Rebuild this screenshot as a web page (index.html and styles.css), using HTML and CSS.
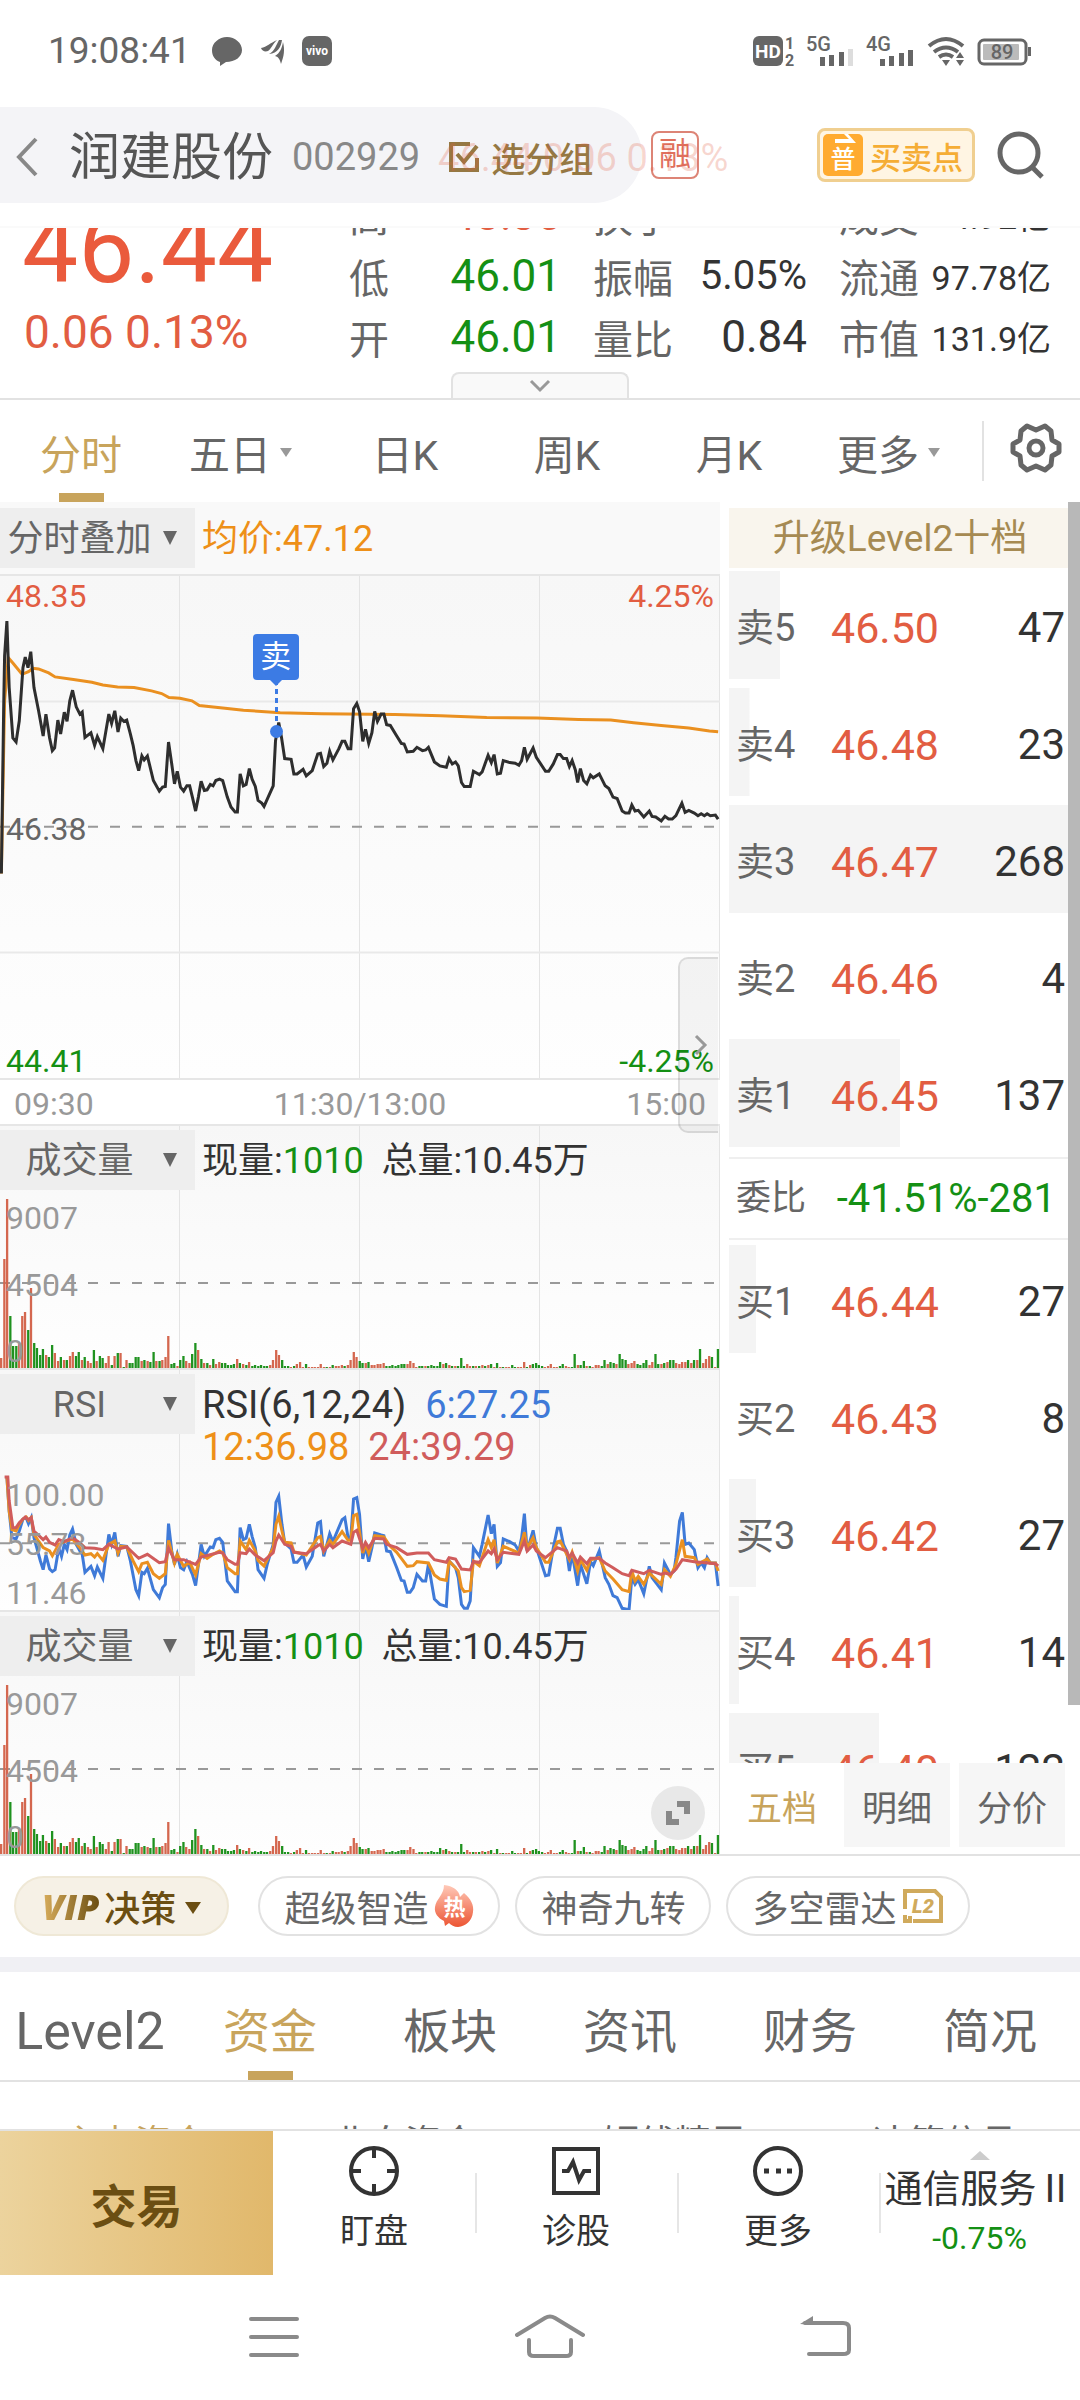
FILE: index.html
```html
<!DOCTYPE html>
<html lang="zh-CN">
<head>
  <meta charset="UTF-8">
  <meta name="viewport" content="width=device-width, initial-scale=1">
  <title>润建股份 002929</title>
  <link rel="stylesheet" href="styles.css">
</head>
<body>
  <!-- status bar -->
  <div class="status">
    <span class="clock">19:08:41</span>
    <svg class="status-left" viewBox="0 0 122 32" width="122" height="32" fill="#666">
      <path d="M15 2C7 2 0 8 0 15c0 6 3 10 8 12v4l6-4c9 0 16-5 16-12S23 2 15 2z"/>
      <path d="M49 13c6-1 9-5 16-8-5 5-6 9-9 11-3 1-6 0-7-3zM57 19c6-3 7-9 10-14l3 0c-1 7-4 13-13 14zM63 21c5-3 7-8 8-14 2 8 1 14-2 22-1-4-2-7-6-8z"/>
      <rect x="90" y="1" width="30" height="30" rx="7"/>
      <text x="105" y="20" text-anchor="middle" class="vivo">vivo</text>
    </svg>
    <svg class="status-right" viewBox="0 0 280 32" width="280" height="32" fill="#666">
      <rect x="1" y="1" width="30" height="30" rx="6"/>
      <text x="16" y="23" text-anchor="middle" class="hd">HD</text>
      <text x="33" y="14" class="tiny">1</text>
      <text x="33" y="31" class="tiny">2</text>
      <text x="54" y="16" class="net">5G</text>
      <path d="M68 22h5v9h-5zM77 20h5v11h-5zM87 17h5v14h-5z"/>
      <path d="M96 14h5v17h-5z" fill="#ddd"/>
      <text x="114" y="16" class="net">4G</text>
      <path d="M128 24h5v7h-5zM137 21h5v10h-5zM147 18h5v13h-5zM156 15h5v16h-5z"/>
      <path d="M177 11q17-14 34 0M182 17q12-9 24 0M187 22q7-5 14 0" fill="none" stroke="#666" stroke-width="4"/>
      <path d="M190 25h8l-4 6zM204 23l4-6 4 6zM204 25h8l-4 6z"/>
      <rect x="227" y="5" width="47" height="24" rx="5" fill="none" stroke="#666" stroke-width="3"/>
      <rect x="231" y="9" width="36" height="16" rx="1" fill="#bbb"/>
      <path d="M276 12h3v9h-3z"/>
      <text x="250" y="24" text-anchor="middle" class="net">89</text>
    </svg>
  </div>

  <!-- stock header -->
  <header class="header">
    <div class="pill">
      <button class="icon-btn" aria-label="返回">
        <svg viewBox="0 0 24 40" width="24" height="40" fill="none" stroke="#888" stroke-width="4"><path d="M21 2L4 20l17 18"/></svg>
      </button>
      <h1>润建股份</h1>
      <span class="code">002929</span>
      <button class="group">
        <svg viewBox="0 0 32 32" width="32" height="32" fill="none" stroke="#957843" stroke-width="4"><path d="M22 3H3v26h26V17M9 13l7 8L29 5"/></svg>
        选分组
      </button>
    </div>
    <span class="ghost">46.44 0.06 0.13%</span>
    <span class="margin-tag">融</span>
    <button class="trade-point">
      <span class="pu"><svg viewBox="0 0 34 14" width="34" height="14" fill="#fff"><path d="M12 5h14l-5-5h4l8 9H12z"/></svg>普</span>
      买卖点
    </button>
    <button class="icon-btn search" aria-label="搜索">
      <svg viewBox="0 0 50 50" width="50" height="50" fill="none" stroke="#666" stroke-width="5"><circle cx="23" cy="23" r="19"/><path d="M36 37l10 10"/></svg>
    </button>
  </header>

  <!-- quote summary, scrolled under the header -->
  <section class="quote">
    <div class="last">
      <strong>46.44</strong>
      <span>0.06 0.13%</span>
    </div>
    <dl>
      <dt>高</dt><dd class="up">48.35</dd>
      <dt>换手</dt><dd class="mid">4.96%</dd>
      <dt>成交</dt><dd class="small">4.92亿</dd>
      <dt>低</dt><dd class="down">46.01</dd>
      <dt>振幅</dt><dd class="mid">5.05%</dd>
      <dt>流通</dt><dd class="small">97.78亿</dd>
      <dt>开</dt><dd class="down">46.01</dd>
      <dt>量比</dt><dd>0.84</dd>
      <dt>市值</dt><dd class="small">131.9亿</dd>
    </dl>
    <button class="unfold" aria-label="展开">
      <svg viewBox="0 0 22 14" width="22" height="14" fill="none" stroke="#999" stroke-width="3"><path d="M2 2l9 9 9-9"/></svg>
    </button>
  </section>

  <!-- period tabs -->
  <nav class="period">
    <div class="period-tabs">
      <a href="#" class="active">分时</a>
      <a href="#">五日<i></i></a>
      <a href="#">日K</a>
      <a href="#">周K</a>
      <a href="#">月K</a>
      <a href="#">更多<i></i></a>
    </div>
    <button class="icon-btn gear" aria-label="设置">
      <svg viewBox="0 0 52 52" width="52" height="52" fill="none" stroke="#666" stroke-width="5" stroke-linejoin="round">
        <path d="M17 4l9 4 9-4 6 5 1 9 7 4v8l-7 4-1 9-6 5-9-4-9 4-6-5-1-9-7-4v-8l7-4 1-9z"/><circle cx="26" cy="26" r="7"/>
      </svg>
    </button>
  </nav>

  <main class="market">
    <div class="charts">
      <div class="panel-head">
        <label class="pick"><select aria-label="分时叠加"><option>分时叠加</option></select></label>
        <p class="orange">均价:47.12</p>
      </div>
      <div class="plot price">
        <svg class="lines" viewBox="0 224 1568 1512" preserveAspectRatio="none">
          <path class="rule" d="M0 602H1568M0 1358H1568"/>
          <path class="dash" d="M0 979H1568"/>
          <polyline class="avg" points="3,1120 10,600 18,470 28,486 48,520 62,512 72,502 84,504 106,516 120,528 160,536 200,544 224,552 256,558 292,560 330,570 352,578 368,590 392,592 418,600 434,614 490,622 530,628 610,636 700,639 860,641 960,645 1060,650 1170,652 1260,656 1330,658 1380,666 1440,674 1500,682 1545,691 1564,693"/>
          <polyline class="now" points="3,1120 8,620 10,465 15,360 20,560 28,712 35,724 42,660 50,500 55,468 61,500 67,452 74,560 84,630 94,706 100,640 108,712 114,750 119,742 126,658 132,700 140,634 146,662 152,600 158,568 166,618 174,640 179,634 185,710 198,696 206,734 212,708 224,744 237,640 243,668 250,630 257,694 263,652 270,662 276,658 284,700 290,735 296,780 302,810 309,766 314,778 321,766 334,840 347,872 354,860 360,858 367,724 374,790 380,850 386,812 393,860 400,872 407,856 413,856 419,890 426,932 432,890 438,842 445,870 451,868 458,852 464,856 470,840 478,836 485,840 495,890 503,920 512,935 517,935 523,820 530,856 536,852 543,804 549,836 556,858 562,900 570,908 575,918 584,890 595,856 600,720 607,665 613,710 620,774 634,776 640,820 647,820 660,806 667,826 680,810 692,760 698,758 705,798 712,788 718,752 725,778 738,744 745,722 751,722 758,744 764,744 770,624 777,608 783,632 790,722 796,686 803,728 810,696 816,632 822,662 830,640 836,640 842,672 850,674 864,706 874,728 880,730 887,754 900,752 908,740 920,750 927,748 933,740 946,784 958,796 972,800 978,774 985,790 992,784 998,796 1005,846 1011,858 1024,858 1031,812 1044,822 1050,814 1063,764 1070,786 1076,762 1083,820 1090,818 1096,780 1110,786 1122,788 1130,794 1136,780 1142,740 1148,776 1161,742 1168,770 1188,812 1195,812 1205,790 1214,762 1220,762 1227,774 1234,774 1240,798 1246,780 1253,808 1258,846 1264,804 1271,840 1278,850 1286,824 1292,832 1305,820 1318,856 1326,864 1335,890 1344,894 1355,932 1362,938 1370,938 1376,914 1383,932 1390,930 1402,950 1414,932 1420,948 1428,950 1440,962 1448,948 1456,956 1464,956 1472,946 1485,908 1492,936 1500,930 1512,938 1520,946 1527,940 1534,946 1540,940 1547,946 1558,944 1564,956"/>
        </svg>
        <div class="scale">
          <span class="up">48.35</span><span>46.38</span><span class="down">44.41</span>
        </div>
        <div class="scale right">
          <span class="up">4.25%</span><span class="down">-4.25%</span>
        </div>
        <div class="sell-flag"><b>卖</b></div>
        <button class="drawer" aria-label="收起盘口">
          <svg viewBox="0 0 14 22" width="14" height="22" fill="none" stroke="#999" stroke-width="3"><path d="M2 2l9 9-9 9"/></svg>
        </button>
      </div>
      <div class="times"><span>09:30</span><span>11:30/13:00</span><span>15:00</span></div>

      <div class="panel">
        <div class="panel-head">
          <label class="pick"><select aria-label="指标一"><option>成交量</option></select></label>
          <p>现量:<span class="down">1010</span>&nbsp; 总量:10.45万</p>
        </div>
        <div class="plot">
          <svg class="lines volume" viewBox="0 0 1568 170" preserveAspectRatio="none"></svg>
          <div class="scale"><span>9007</span><span>4504</span><span>0</span></div>
        </div>
      </div>

      <div class="panel">
        <div class="panel-head">
          <label class="pick"><select aria-label="指标二"><option>RSI</option></select></label>
          <p class="rsi-values">RSI(6,12,24)&nbsp; <span class="blue">6:27.25</span><br><span class="orange">12:36.98</span>&nbsp; <span class="rose">24:39.29</span></p>
        </div>
        <div class="plot rsi">
          <svg class="lines" viewBox="0 312 1568 405" preserveAspectRatio="none">
            <path class="dash" d="M0 517H1568"/>
            <polyline class="rsi6" points="15,318 20,420 26,500 35,504 42,480 50,444 57,440 62,458 68,440 74,500 80,530 88,570 94,596 100,552 108,594 114,602 120,596 128,530 134,556 140,520 146,536 152,492 158,474 166,520 174,540 179,550 185,604 198,586 206,614 212,588 224,622 237,490 243,520 250,484 257,556 263,524 276,526 284,570 296,656 302,674 309,604 314,608 321,592 334,656 347,680 354,650 360,640 367,458 374,540 380,580 386,550 393,590 400,596 407,572 419,610 426,644 438,520 445,556 458,528 464,530 470,506 478,502 485,514 495,630 512,662 517,662 523,470 530,506 536,502 543,460 549,496 556,530 562,596 575,622 582,580 595,520 601,394 607,376 614,460 620,516 634,534 640,574 647,574 660,552 667,588 680,556 692,456 698,452 705,556 718,488 725,512 745,446 751,440 758,500 764,500 770,384 777,380 783,430 790,564 796,524 803,572 810,530 816,486 830,492 836,494 842,540 850,542 864,590 874,628 880,630 887,664 893,664 900,650 908,610 920,630 927,630 933,580 946,684 958,700 972,706 978,570 992,590 998,620 1005,700 1011,712 1018,712 1024,690 1031,530 1044,556 1050,520 1063,432 1070,488 1076,460 1083,586 1090,575 1096,504 1110,512 1122,522 1130,540 1136,500 1142,428 1148,540 1161,478 1168,530 1188,614 1195,612 1205,530 1214,472 1220,472 1227,520 1234,540 1240,600 1246,546 1258,644 1264,580 1278,638 1286,572 1292,584 1305,540 1318,620 1326,640 1335,674 1344,680 1355,712 1370,716 1376,620 1383,640 1390,626 1402,668 1414,586 1420,620 1440,656 1447,576 1460,610 1468,600 1472,560 1480,450 1486,424 1492,520 1500,516 1512,536 1520,590 1527,576 1534,590 1540,560 1547,576 1558,576 1564,645"/>
            <polyline class="rsi12" points="15,318 20,420 26,476 35,480 42,460 50,444 57,438 62,448 68,440 74,490 84,510 94,530 108,540 114,554 128,520 140,512 158,504 174,530 185,552 198,548 206,558 212,548 224,568 237,520 250,510 257,546 263,526 276,528 290,570 302,602 309,578 321,574 334,608 347,622 360,608 367,508 380,576 386,550 400,586 413,574 426,612 438,548 451,562 464,550 478,540 485,545 495,590 512,608 517,608 523,510 536,536 543,508 556,540 562,568 575,585 595,530 601,460 607,436 614,480 620,514 634,516 640,542 667,552 692,500 698,496 705,540 718,508 725,520 745,482 758,508 764,508 770,434 777,430 790,546 796,520 803,546 816,494 836,498 850,526 864,544 874,562 887,586 900,584 908,572 933,576 946,612 958,624 972,628 978,570 998,600 1005,650 1011,662 1024,658 1031,570 1044,584 1063,506 1070,530 1076,506 1083,576 1096,526 1130,546 1142,484 1148,530 1161,500 1168,530 1188,574 1195,574 1214,512 1220,510 1240,566 1246,544 1258,600 1264,566 1278,598 1286,566 1305,560 1318,600 1335,624 1355,656 1370,662 1376,600 1383,630 1390,616 1402,640 1414,606 1440,640 1447,596 1460,616 1472,580 1486,506 1492,556 1512,560 1520,580 1540,564 1547,576 1558,576 1564,600"/>
            <polyline class="rsi24" points="10,318 17,318 20,390 28,470 35,470 42,455 55,438 62,446 68,440 74,480 94,506 100,498 108,514 120,522 128,506 140,512 158,500 174,516 185,530 206,532 224,536 237,520 257,534 276,528 302,562 321,550 347,575 360,572 367,532 380,566 400,566 426,580 438,558 478,544 485,546 495,566 512,580 517,580 523,545 536,548 543,534 556,552 575,569 595,545 601,510 607,492 620,520 634,526 640,544 667,548 692,524 698,520 705,540 718,520 725,530 745,510 764,520 770,484 777,478 790,532 796,514 803,530 816,502 836,504 842,520 864,530 887,550 908,546 933,546 946,566 972,574 978,560 992,564 1005,594 1024,597 1031,572 1044,574 1063,540 1070,548 1076,534 1083,566 1096,544 1130,550 1142,510 1148,540 1161,522 1168,540 1188,560 1214,530 1234,540 1240,560 1246,546 1258,576 1264,558 1278,578 1286,562 1305,562 1318,576 1335,590 1355,608 1370,614 1376,598 1402,608 1414,598 1440,610 1447,606 1460,610 1472,595 1486,566 1512,572 1558,578 1564,585"/>
          </svg>
          <div class="scale"><span>100.00</span><span>55.73</span><span>11.46</span></div>
        </div>
      </div>

      <div class="panel">
        <div class="panel-head">
          <label class="pick"><select aria-label="指标三"><option>成交量</option></select></label>
          <p>现量:<span class="down">1010</span>&nbsp; 总量:10.45万</p>
        </div>
        <div class="plot">
          <svg class="lines volume" viewBox="0 0 1568 170" preserveAspectRatio="none"></svg>
          <div class="scale"><span>9007</span><span>4504</span><span>0</span></div>
          <button class="expand" aria-label="全屏">
            <svg viewBox="0 0 26 26" width="26" height="26" fill="none" stroke="#888" stroke-width="6"><path d="M12 4h10v10M4 11v11h10"/></svg>
          </button>
        </div>
      </div>
    </div>

    <aside class="book">
      <a href="#" class="upgrade">升级Level2十档</a>
      <div class="levels">
        <table id="asks"></table>
        <p class="ratio"><span>委比</span><b>-41.51%-281</b></p>
        <table id="bids"></table>
      </div>
      <div class="book-tabs">
        <button class="active">五档</button>
        <button>明细</button>
        <button>分价</button>
      </div>
      <div class="scrollbar"></div>
    </aside>
  </main>

  <div class="chips">
    <button class="chip vip"><em>VIP</em>决策<i></i></button>
    <button class="chip">超级智造
      <span class="hot"><svg viewBox="0 0 40 44" width="40" height="44">
        <defs><linearGradient id="fire" x1="0" y1="0" x2="0" y2="1"><stop offset="0" stop-color="#ffc9b8"/><stop offset="1" stop-color="#ec5533"/></linearGradient></defs>
        <path fill="url(#fire)" d="M10 1c9 1 15 5 16 12l4-4c7 6 10 12 9 19-1 9-7 14-15 15-4 0-7-2-9-4l-4 3-1-5C4 34 0 29 1 23c1-8 9-12 9-22z"/>
      </svg><b>热</b></span>
    </button>
    <button class="chip">神奇九转</button>
    <button class="chip">多空雷达
      <svg viewBox="0 0 42 36" width="42" height="36" fill="none" stroke="#d0aa5c" stroke-width="4"><path d="M3 21V3h30l6 6v24H11M3 27v6h5v-5"/><text x="21" y="25" text-anchor="middle" class="l2">L2</text></svg>
    </button>
  </div>

  <nav class="sections">
    <a href="#" class="latin">Level2</a>
    <a href="#" class="active">资金</a>
    <a href="#">板块</a>
    <a href="#">资讯</a>
    <a href="#">财务</a>
    <a href="#">简况</a>
  </nav>
  <nav class="subtabs">
    <a href="#" class="active">主力资金</a>
    <a href="#">北向资金</a>
    <a href="#">短线精灵</a>
    <a href="#">决策信号</a>
  </nav>

  <footer class="actions">
    <button class="deal">交易</button>
    <button class="action">
      <svg viewBox="0 0 52 52" width="52" height="52" fill="none" stroke="#333" stroke-width="4"><circle cx="26" cy="26" r="23"/><path d="M26 3v10M26 39v10M3 26h10M39 26h10"/></svg>
      盯盘
    </button>
    <button class="action">
      <svg viewBox="0 0 52 52" width="52" height="52" fill="none" stroke="#333" stroke-width="4"><path d="M4 4h44v44H4zM12 26h6l5-9 6 18 5-9h7"/></svg>
      诊股
    </button>
    <button class="action">
      <svg viewBox="0 0 52 52" width="52" height="52" fill="none" stroke="#333" stroke-width="4"><circle cx="26" cy="26" r="23"/><path d="M12 26h5M24 26h5M35 26h5" stroke-width="5"/></svg>
      更多
    </button>
    <button class="action sector">
      <i></i>
      <span>通信服务Ⅱ</span>
      <b class="down">-0.75%</b>
    </button>
  </footer>

  <div class="system-nav">
    <svg viewBox="0 0 52 44" width="52" height="44"><path d="M3 4h46M3 22h46M3 40h46"/></svg>
    <svg viewBox="0 0 70 48" width="70" height="48"><path d="M2 22L30 5q5-3 10 0l28 17M14 27v12q0 4 5 4h32q5 0 5-4V27"/></svg>
    <svg viewBox="0 0 54 46" width="54" height="46"><path d="M6 9h38q6 0 6 5v22q0 4-6 4H10"/><path d="M1 10L14 2v9z" class="arrow"/></svg>
  </div>

  <script>
    // bar heights per minute, negative = falling (green)
    const volumes = [
      10, 109, 169, -52, -22, -22, 25, 52, 56, -38, 80, -25, -20, -13, -19, 13, -11, -23, 15, 7,
      -11, 8, -8, 12, 16, -12, -16, 8, -11, 7, 5, -18, 7, -12, -10, 5, 12, -3, 12, -15,
      15, -1, 8, -5, -5, -11, -11, 7, -8, 7, -6, -16, 7, -7, 8, 11, 32, -4, -5, 2,
      -8, -12, 7, 5, -14, -25, 18, -9, 5, -5, 3, -9, 4, 6, -5, -5, -3, -3, -4, 9,
      -5, 4, -3, 6, -2, -3, -2, -3, -2, -2, 3, 8, 18, 13, -8, -2, -2, 1, -2, 4,
      6, 1, -4, 1, 1, 1, 1, 4, 1, -1, 1, -3, 2, 2, 3, -2, 3, 8, 16, 11,
      -7, -5, 5, -6, 3, 3, 4, 4, 5, -2, -2, -3, -2, -3, -4, -4, 4, 7, 5, 1,
      -2, -2, 2, -2, -3, -2, -2, -6, 4, -5, 3, -2, 2, -2, -10, -2, 4, 2, -2, 2,
      -2, 3, -2, 3, -4, 1, -5, 1, -1, 1, 1, -3, -1, 1, 1, 6, -1, 3, -4, -5,
      -3, -2, 1, 2, 4, 1, 1, -2, -4, 2, 1, -1, -14, 3, -3, -7, 2, -2, 1, 3,
      3, -2, -8, 4, -6, -5, 4, -14, -9, -8, 4, 5, 7, -4, -3, -5, -8, 3, 6, -14,
      -4, 4, -5, 6, -8, -8, 5, 4, 6, 6, -8, 5, -8, 8, -19, 5, 9, 12, -11, 1,
      -19
    ];
    const step = 1568 / volumes.length;
    const bars = volumes.map((v, i) =>
      `<rect x="${Math.round(i * step)}" y="${170 - Math.abs(v)}" width="5" height="${Math.abs(v)}" class="${v < 0 ? 'fall' : 'rise'}"/>`
    ).join('');
    document.querySelectorAll('.volume').forEach(svg => {
      svg.innerHTML = '<path class="dash" d="M0 85H1568"/>' + bars;
    });

    // order book: name, price, lots, depth in percent
    const asks = [
      ['卖5', '46.50', 47, 15], ['卖4', '46.48', 23, 6], ['卖3', '46.47', 268, 100],
      ['卖2', '46.46', 4, 0], ['卖1', '46.45', 137, 50]
    ];
    const bids = [
      ['买1', '46.44', 27, 8], ['买2', '46.43', 8, 0], ['买3', '46.42', 27, 8],
      ['买4', '46.41', 14, 3], ['买5', '46.40', 122, 44]
    ];
    function fill(id, rows) {
      document.getElementById(id).innerHTML = rows.map(([name, price, lots, depth]) =>
        `<tr style="background-size: ${depth}% 100%"><th>${name}</th><td>${price}</td><td class="lots">${lots}</td></tr>`
      ).join('');
    }
    fill('asks', asks);
    fill('bids', bids);
  </script>
</body>
</html>
```
FILE: styles.css
```css
* {
  box-sizing: border-box;
}
body {
  margin: 0;
  font-family: Roboto, "Noto Sans CJK SC", sans-serif;
  font-size: 36px;
  color: #333;
  background: #fff;
  overflow-x: hidden;
}
button, select {
  font: inherit;
  color: inherit;
  border: 0;
  padding: 0;
  background: none;
}
a {
  color: inherit;
  text-decoration: none;
}
h1, p, dl, dd {
  margin: 0;
}
svg {
  display: block;
  flex: none;
}
.up { color: #e25d42; }
.down { color: #149014; }
.orange { color: #ee9018; }
.blue { color: #3f7ad8; }
.rose { color: #d05c5c; }

/* status bar */
.status {
  display: flex;
  align-items: center;
  height: 108px;
  padding: 0 48px;
  padding-bottom: 6px;
  color: #666;
}
.clock {
  font-size: 37px;
  line-height: 40px;
}
.status-left {
  margin-left: 21px;
}
.status-right {
  margin-left: auto;
}
.vivo {
  fill: #fff;
  font-size: 12px;
  font-weight: 700;
}
.hd {
  fill: #fff;
  font-size: 19px;
  font-weight: 700;
}
.tiny {
  font-size: 16px;
  font-weight: 700;
}
.net {
  font-size: 20px;
  font-weight: 500;
}

/* header */
.header {
  position: relative;
  display: flex;
  align-items: center;
  height: 120px;
  padding-bottom: 24px;
  border-bottom: 2px solid #fafafa;
}
.pill {
  display: flex;
  align-items: center;
  width: 642px;
  height: 96px;
  padding: 4px 0 0 15px;
  border-radius: 0 48px 48px 0;
  background: #f4f4f7;
}
.header h1 {
  margin-left: 30px;
  padding-top: 2px;
  font-size: 51px;
  font-weight: 400;
  line-height: 60px;
  color: #555;
}
.code {
  margin-left: 19px;
  font-size: 38px;
  color: #888;
}
.group {
  display: flex;
  align-items: center;
  gap: 11px;
  margin-left: 28px;
  font-size: 34px;
  font-weight: 500;
  color: #957843;
}
.ghost {
  position: absolute;
  left: 438px;
  top: 28px;
  font-size: 38px;
  line-height: 44px;
  color: rgba(226, 93, 66, 0.25);
}
.margin-tag {
  width: 48px;
  height: 48px;
  margin-left: 9px;
  border: 2px solid #dd8476;
  border-radius: 8px;
  font-size: 32px;
  line-height: 42px;
  text-align: center;
  color: #e0705e;
}
.trade-point {
  display: flex;
  align-items: center;
  gap: 7px;
  height: 54px;
  margin-left: auto;
  padding: 0 9px 0 3px;
  border: 3px solid #f0cf90;
  border-radius: 8px;
  background: #fff5e3;
  font-size: 31px;
  font-weight: 500;
  color: #f5ad35;
}
.pu {
  width: 40px;
  height: 42px;
  border-radius: 5px;
  background: #ffab30;
  color: #fff;
  font-size: 25px;
  line-height: 24px;
}
.search {
  margin: 0 34px 0 21px;
}

/* quote */
.quote {
  position: relative;
  display: flex;
  justify-content: space-between;
  align-items: flex-end;
  height: 172px;
  padding: 0 29px 31px 22px;
  border-bottom: 2px solid #e2e2e2;
  overflow: hidden;
}
.last {
  display: flex;
  flex-direction: column;
  gap: 4px;
  padding-bottom: 5px;
  color: #e25d42;
}
.last strong {
  font-size: 100px;
  font-weight: 400;
  line-height: 100px;
  color: #ea5a3c;
}
.last span {
  padding-left: 2px;
  font-size: 46px;
  line-height: 60px;
}
.quote dl {
  display: grid;
  grid-template-columns: 80px 132px 112px 134px 112px 132px;
  align-items: center;
  grid-auto-rows: 61px;
  font-size: 44px;
  white-space: nowrap;
}
.quote dt {
  font-size: 40px;
  color: #666;
}
.quote dd {
  text-align: right;
}
.quote dt:nth-of-type(3n+2),
.quote dt:nth-of-type(3n) {
  padding-left: 32px;
}
.quote .mid {
  font-size: 40px;
}
.quote .small {
  font-size: 34px;
}
.unfold {
  position: absolute;
  left: calc(50% - 89px);
  bottom: 0;
  display: flex;
  align-items: center;
  justify-content: center;
  width: 178px;
  height: 26px;
  border: 2px solid #e2e2e2;
  border-bottom: 0;
  border-radius: 8px 8px 0 0;
  background: #f9f9f9;
}

/* period tabs */
.period {
  display: flex;
  align-items: center;
  height: 102px;
  color: #666;
}
.period-tabs {
  display: grid;
  grid-template-columns: repeat(6, 1fr);
  flex: 1;
  height: 100%;
  padding-right: 10px;
}
.period-tabs a {
  position: relative;
  padding-top: 10px;
  font-size: 41px;
  line-height: 92px;
  text-align: center;
}
.period-tabs i {
  position: absolute;
  right: 32px;
  top: 48px;
}
.period-tabs a:has(i) {
  padding-right: 26px;
}
.period-tabs i,
.sector i,
.vip i {
  border: 6px solid transparent;
  border-top: 9px solid #999;
  border-bottom: 0;
}
.active {
  color: #c8a45c;
}
.period-tabs .active::after,
.sections .active::after {
  content: "";
  position: absolute;
  left: calc(50% - 22px);
  bottom: 0;
  width: 45px;
  height: 9px;
  background: #c8a45c;
}
.gear {
  display: flex;
  align-items: center;
  height: 60px;
  padding: 0 18px 0 26px;
  border-left: 2px solid #e2e2e2;
}
.gear svg {
  margin-top: -6px;
}

/* charts */
.market {
  display: grid;
  grid-template-columns: 2fr 1fr;
  border-bottom: 2px solid #e2e2e2;
}
.charts {
  background: #f9f9f9;
}
.panel,
.plot.price {
  background-image: linear-gradient(90deg, transparent calc(100% - 1px), #e4e4e4 0), linear-gradient(#f7f7f7, #fefefe);
  background-size: 25% 100%, 100% 100%;
}
.panel {
  border-top: 2px solid #e6e6e6;
}
.panel-head {
  display: flex;
  align-items: flex-start;
  height: 72px;
  padding-top: 6px;
}
.panel .panel-head {
  padding-top: 4px;
}
.panel-head p {
  padding-left: 7px;
  font-size: 36px;
  line-height: 62px;
}
.pick {
  position: relative;
  width: 195px;
  height: 60px;
  background: #eee;
}
.pick::after {
  content: "";
  position: absolute;
  right: 18px;
  top: 23px;
  border: 7px solid transparent;
  border-top: 14px solid #666;
  border-bottom: 0;
}
.pick select {
  appearance: none;
  width: 100%;
  height: 60px;
  padding: 2px 36px 0 0;
  color: #666;
  font-size: 36px;
  text-align: center;
  text-align-last: center;
}
.panel-head .rsi-values {
  font-size: 38px;
  line-height: 42px;
  padding-top: 10px;
}
.plot {
  position: relative;
  height: 170px;
}
.plot.price {
  height: 506px;
  border-top: 2px solid #e6e6e6;
  border-bottom: 2px solid #e6e6e6;
}
.lines {
  width: 100%;
  height: 100%;
}
.lines path,
.lines polyline {
  fill: none;
  vector-effect: non-scaling-stroke;
  stroke-width: 3px;
}
.lines .rule {
  stroke: #e9e9e9;
  stroke-width: 2px;
}
.lines .dash {
  stroke: #999;
  stroke-width: 2px;
  stroke-dasharray: 10 12;
}
.avg, .rsi12 { stroke: #ea9020; }
.now { stroke: #2e2e2e; }
.rsi6 { stroke: #3f7ad8; }
.rsi24 { stroke: #d05c5c; }
.rise { fill: #d4674f; }
.fall { fill: #1f921f; }
.scale {
  position: absolute;
  inset: 0 auto 0 6px;
  display: flex;
  flex-direction: column;
  justify-content: space-between;
  padding-top: 3px;
  font-size: 32px;
  line-height: 34px;
  color: #999;
}
.price .scale {
  color: #666;
}
.scale .up { color: #e25d42; }
.scale .down { color: #149014; }
.scale.right {
  inset: 0 6px 0 auto;
  text-align: right;
}
.sell-flag {
  position: absolute;
  left: 38.3%;
  top: 58px;
  margin-left: -23px;
  width: 46px;
  height: 90px;
  background: linear-gradient(#3c7be4 60%, transparent 0) 22px 46px / 3px 9px repeat-y;
}
.sell-flag b {
  display: block;
  position: relative;
  height: 46px;
  border-radius: 4px;
  background: #3c7be4;
  color: #fff;
  font-size: 31px;
  font-weight: 400;
  line-height: 46px;
  text-align: center;
}
.sell-flag b::after {
  content: "";
  position: absolute;
  left: 17px;
  top: 46px;
  border: 6px solid transparent;
  border-top-color: #3c7be4;
}
.sell-flag::after {
  content: "";
  position: absolute;
  left: 17px;
  bottom: -14px;
  width: 13px;
  height: 13px;
  border-radius: 50%;
  background: #3c7be4;
}
.drawer {
  position: absolute;
  right: 2px;
  top: 381px;
  z-index: 1;
  width: 40px;
  height: 176px;
  padding-left: 14px;
  border: 2px solid rgba(0, 0, 0, 0.1);
  border-right: 0;
  border-radius: 10px 0 0 10px;
  background: rgba(0, 0, 0, 0.04);
}
.times {
  display: flex;
  justify-content: space-between;
  height: 44px;
  padding: 0 14px;
  background: #fff;
  font-size: 32px;
  line-height: 48px;
  color: #999;
}
.plot.rsi {
  height: 135px;
  margin-top: 33px;
}
.expand {
  position: absolute;
  right: 15px;
  bottom: 14px;
  display: flex;
  align-items: center;
  justify-content: center;
  width: 54px;
  height: 54px;
  border-radius: 50%;
  background: #e8e8e8;
}

/* order book */
.book {
  position: relative;
  display: flex;
  flex-direction: column;
  padding: 6px 9px 7px;
}
.upgrade {
  display: block;
  height: 60px;
  background: #f9f5ed;
  color: #a68a52;
  font-size: 37px;
  line-height: 62px;
  text-align: center;
}
.levels {
  flex: 1 1 0;
  overflow: hidden;
}
.levels table {
  width: 100%;
  border-spacing: 0 9px;
  margin: -6px 0;
}
.levels tr {
  background: linear-gradient(#f4f4f4, #f4f4f4) no-repeat;
}
.levels th,
.levels td {
  height: 108px;
  padding: 6px 0 0;
  line-height: 50px;
}
.levels th {
  width: 102px;
  padding-left: 7px;
  font-size: 38px;
  font-weight: 400;
  text-align: left;
  color: #666;
}
.levels td {
  font-size: 43px;
  color: #e25d42;
}
.levels .lots {
  padding-right: 6px;
  font-size: 42px;
  text-align: right;
  color: #333;
}
.ratio {
  display: flex;
  justify-content: space-between;
  margin: 7px 0 2px;
  padding: 0 15px 0 7px;
  border-top: 2px solid #efefef;
  border-bottom: 2px solid #efefef;
  font-size: 35px;
  line-height: 79px;
  color: #666;
}
.ratio b {
  font-size: 40px;
  font-weight: 400;
  color: #149014;
}
.book-tabs {
  display: grid;
  grid-template-columns: repeat(3, 1fr);
  gap: 9px;
  height: 84px;
  padding-right: 6px;
}
.book-tabs button {
  background: #f6f6f6;
  color: #666;
  font-size: 35px;
}
.book-tabs .active {
  background: #fff;
  color: #c8a45c;
}
.scrollbar {
  position: absolute;
  right: 0;
  top: 0;
  width: 12px;
  height: 89%;
  background: #b8b8b8;
}

/* strategy chips */
.chips {
  display: flex;
  gap: 15px;
  padding: 20px 14px 21px;
  border-bottom: 15px solid #f0f0f4;
}
.chip {
  display: flex;
  align-items: center;
  gap: 6px;
  height: 60px;
  padding: 0 24px;
  border: 2px solid #e2e2e2;
  border-radius: 30px;
  color: #666;
}
.vip {
  gap: 5px;
  margin-right: 14px;
  padding: 0 26px;
  border-color: #efe8d6;
  background: #f6f1e6;
  color: #6b4e12;
  font-weight: 500;
}
.vip em {
  font-family: "Open Sans", sans-serif;
  font-weight: 800;
  background: linear-gradient(90deg, #d9ae5c, #6b4e12);
  background-clip: text;
  color: transparent;
}
.vip i {
  margin: 4px 0 0 4px;
  border-width: 12px 8px 0;
  border-top-color: #6b4e12;
}
.hot {
  position: relative;
}
.hot b {
  position: absolute;
  left: 9px;
  top: 12px;
  font-size: 22px;
  line-height: 24px;
  color: #fff;
}
.l2 {
  fill: #d0aa5c;
  stroke: none;
  font-size: 20px;
  font-weight: 900;
  font-style: italic;
}

/* section tabs */
.sections {
  display: grid;
  grid-template-columns: repeat(6, 1fr);
  height: 110px;
  border-bottom: 2px solid #e2e2e2;
  font-size: 47px;
  line-height: 96px;
  text-align: center;
  color: #666;
}
.sections a {
  position: relative;
  padding-top: 12px;
}
.sections .latin {
  font-size: 52px;
}
.subtabs {
  display: grid;
  grid-template-columns: repeat(4, 1fr);
  height: 47px;
  overflow: hidden;
  font-size: 36px;
  line-height: 124px;
  text-align: center;
  color: #666;
}
.subtabs .active {
  color: #c8a45c;
}

/* bottom bar */
.actions {
  display: grid;
  grid-template-columns: 273fr 202fr 202fr 202fr 201fr;
  align-items: center;
  height: 146px;
  border-top: 2px solid #e2e2e2;
}
.deal {
  height: 144px;
  background: linear-gradient(90deg, #ecd39d, #e1b86b);
  color: #6b4e12;
  font-size: 46px;
  font-weight: 700;
}
.action {
  position: relative;
  display: flex;
  flex-direction: column;
  align-items: center;
  gap: 12px;
  height: 144px;
  padding-top: 14px;
  font-size: 34px;
  line-height: 44px;
  white-space: nowrap;
}
.action + .action::before {
  content: "";
  position: absolute;
  left: 0;
  top: 42px;
  width: 2px;
  height: 60px;
  background: #e6e6e6;
}
.sector {
  gap: 3px;
  padding-top: 20px;
}
.sector i {
  border-width: 0 10px 9px;
  border-bottom: 9px solid #ccc;
}
.sector span {
  font-size: 38px;
  line-height: 52px;
}
.sector b {
  font-size: 32px;
  font-weight: 400;
  line-height: 40px;
}

.system-nav {
  display: flex;
  justify-content: space-between;
  align-items: center;
  height: 124px;
  padding: 0 21% 0 23%;
}
.system-nav path {
  fill: none;
  stroke: #8a8a8a;
  stroke-width: 4;
  stroke-linecap: round;
}
.system-nav .arrow {
  fill: #8a8a8a;
  stroke: none;
}
```
